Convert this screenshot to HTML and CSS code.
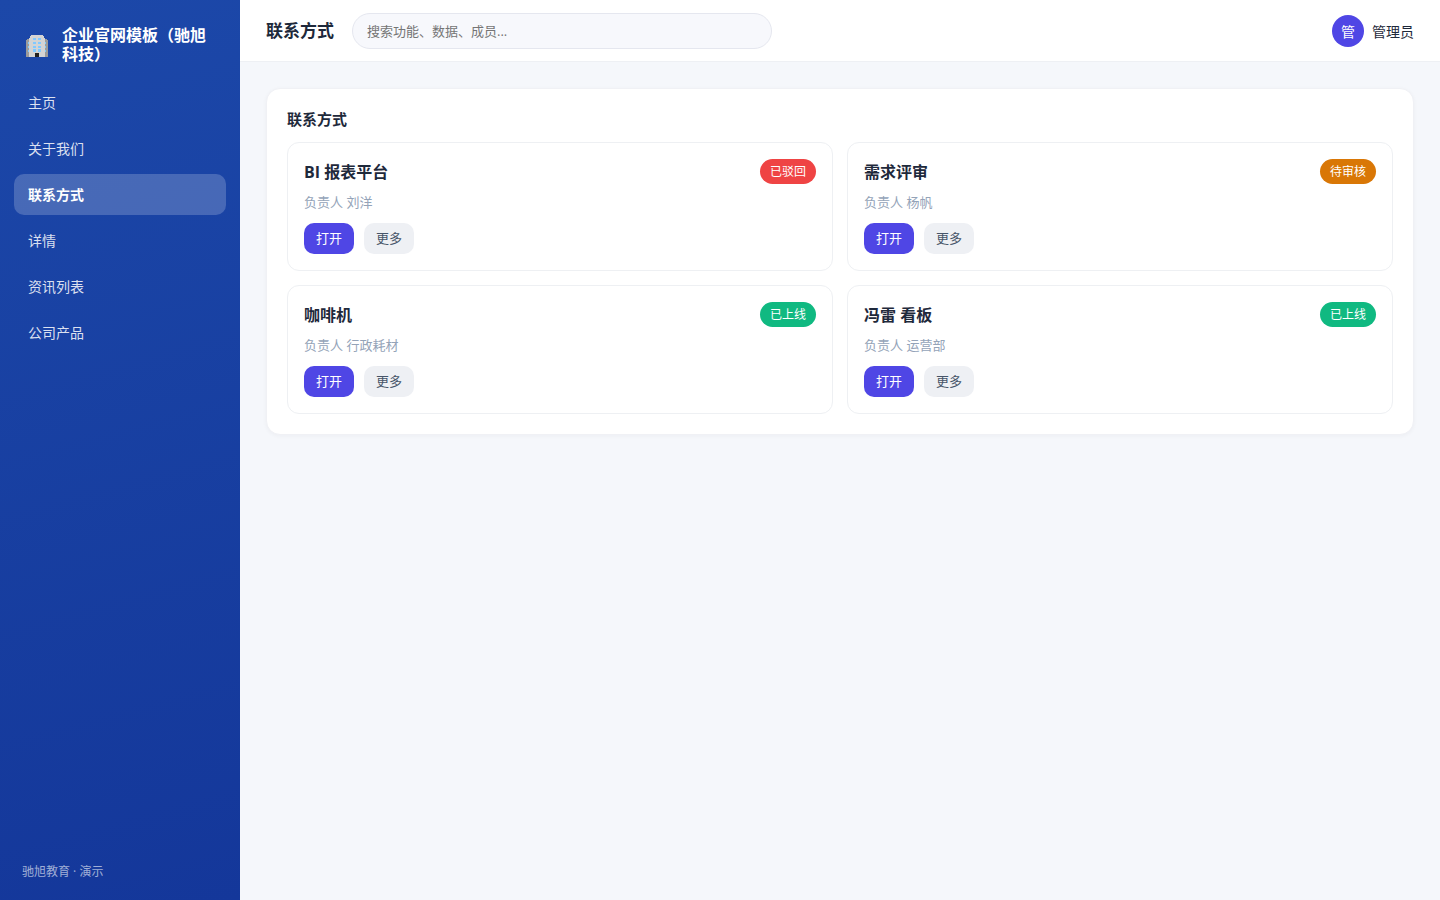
FILE: index.html
```html
<!DOCTYPE html>
<html lang="zh-CN">
<head>
<meta charset="utf-8">
<meta name="viewport" content="width=device-width, initial-scale=1">
<title>联系方式</title>
<link rel="stylesheet" href="styles.css">
</head>
<body>
<div class="app">
  <aside class="sidebar">
    <div class="brand">
      <svg class="brand-icon" viewBox="0 0 22 23" aria-hidden="true" shape-rendering="crispEdges">
        <path fill="#9b9b9b" d="M0 6h1V5h20v1h1v17H0z"/>
        <path fill="#81c9f5" d="M2 8h1v2H2zM2 12h1v2H2zM2 16h1v2H2zM19 8h1v2h-1zM19 12h1v2h-1zM19 16h1v2h-1z"/>
        <path fill="#d4d4d4" d="M3 4h1V2h1V1h12v1h1v2h1v19H3z"/>
        <path fill="#82c9ff" d="M7 4h3v2H7zM12 4h3v2h-3zM7 8h3v2H7zM12 8h3v2h-3zM7 12h3v2H7zM12 12h3v2h-3zM7 15h3v3H7zM12 15h3v3h-3z"/>
        <path fill="#212121" d="M9 19h4v4H9z"/>
      </svg>
      <span class="brand-name">企业官网模板（驰旭科技）</span>
    </div>
    <nav class="nav">
      <a class="nav-link" href="#home">主页</a>
      <a class="nav-link" href="#about">关于我们</a>
      <a class="nav-link active" href="#contact" aria-current="page">联系方式</a>
      <a class="nav-link" href="#detail">详情</a>
      <a class="nav-link" href="#news">资讯列表</a>
      <a class="nav-link" href="#products">公司产品</a>
    </nav>
    <div class="sidebar-foot">驰旭教育 · 演示</div>
  </aside>
  <div class="main">
    <header class="topbar">
      <h1 class="page-title">联系方式</h1>
      <input class="search" type="search" aria-label="搜索" placeholder="搜索功能、数据、成员...">
      <div class="user"><span class="avatar">管</span><span>管理员</span></div>
    </header>
    <main class="content">
      <section class="panel">
        <h2 class="panel-title">联系方式</h2>
        <div class="grid">
          <article class="card">
            <div class="card-head"><h3 class="card-title">BI 报表平台</h3><span class="badge red">已驳回</span></div>
            <p class="meta">负责人 刘洋</p>
            <div class="actions"><button class="btn primary" type="button">打开</button><button class="btn" type="button">更多</button></div>
          </article>
          <article class="card">
            <div class="card-head"><h3 class="card-title">需求评审</h3><span class="badge amber">待审核</span></div>
            <p class="meta">负责人 杨帆</p>
            <div class="actions"><button class="btn primary" type="button">打开</button><button class="btn" type="button">更多</button></div>
          </article>
          <article class="card">
            <div class="card-head"><h3 class="card-title">咖啡机</h3><span class="badge green">已上线</span></div>
            <p class="meta">负责人 行政耗材</p>
            <div class="actions"><button class="btn primary" type="button">打开</button><button class="btn" type="button">更多</button></div>
          </article>
          <article class="card">
            <div class="card-head"><h3 class="card-title">冯雷 看板</h3><span class="badge green">已上线</span></div>
            <p class="meta">负责人 运营部</p>
            <div class="actions"><button class="btn primary" type="button">打开</button><button class="btn" type="button">更多</button></div>
          </article>
        </div>
      </section>
    </main>
  </div>
</div>
</body>
</html>
```
FILE: styles.css
```css
* { box-sizing: border-box; }
body, h1, h2, h3, p { margin: 0; }
body {
  font-family: "Open Sans", "Noto Sans CJK SC", sans-serif;
  font-size: 14px;
  color: #1e293b;
  background: #f5f7fb;
}
button, input { font-family: inherit; }

.app { display: flex; min-height: 100vh; }

.sidebar {
  width: 240px;
  flex: none;
  display: flex;
  flex-direction: column;
  padding: 26px 14px 19px;
  background: linear-gradient(165deg, #1c48a9, #14379a);
  color: #fff;
}
.brand { display: flex; align-items: center; gap: 14px; padding: 0 8px 18px 12px; }
.brand-icon { width: 22px; height: 23px; flex: none; }
.brand-name { font-size: 16px; font-weight: 700; line-height: 19px; }
.nav { display: flex; flex-direction: column; gap: 5px; }
.nav-link {
  padding: 10px 14px;
  border-radius: 10px;
  line-height: 21px;
  color: rgba(255, 255, 255, 0.85);
  text-decoration: none;
}
.nav-link.active { background: rgba(255, 255, 255, 0.2); color: #fff; font-weight: 700; }
.sidebar-foot {
  margin-top: auto;
  padding: 0 8px;
  font-size: 12px;
  line-height: 18px;
  color: rgba(255, 255, 255, 0.6);
}

.main { flex: 1; min-width: 0; }
.topbar {
  display: flex;
  align-items: center;
  gap: 18px;
  padding: 13px 26px 12px;
  background: #fff;
  border-bottom: 1px solid #eef0f4;
}
.page-title { font-size: 17px; line-height: 24px; white-space: nowrap; }
.search {
  flex: 0 1 420px;
  min-width: 0;
  height: 36px;
  padding: 0 14px;
  border: 1px solid #e5e7ef;
  border-radius: 18px;
  background: #f7f8fc;
  font-size: 13px;
  appearance: none;
}
.search::placeholder { color: #757575; }
.user { display: flex; align-items: center; gap: 8px; margin-left: auto; white-space: nowrap; }
.avatar {
  display: grid;
  place-items: center;
  width: 32px;
  height: 32px;
  border-radius: 50%;
  background: #4f46e5;
  color: #fff;
}

.content { padding: 26px; }
.panel {
  padding: 20px;
  border: 1px solid #f0f1f5;
  border-radius: 14px;
  background: #fff;
  box-shadow: 0 1px 4px rgba(15, 23, 42, 0.04);
}
.panel-title { margin-bottom: 13px; font-size: 15px; line-height: 20px; }
.grid { display: grid; grid-template-columns: repeat(2, minmax(0, 1fr)); gap: 14px; }
.card { padding: 16px; border: 1px solid #eef0f3; border-radius: 12px; }
.card-head { display: flex; align-items: center; justify-content: space-between; gap: 10px; }
.card-title { font-size: 16px; line-height: 24px; }
.badge {
  padding: 3px 10px;
  border-radius: 13px;
  font-size: 12px;
  line-height: 19px;
  color: #fff;
  white-space: nowrap;
}
.red { background: #ef4444; }
.amber { background: #d97706; }
.green { background: #10b981; }
.meta { margin: 8px 0 10px; font-size: 13px; line-height: 21px; color: #94a3b8; }
.actions { display: flex; gap: 10px; }
.btn {
  padding: 5px 12px;
  border: 0;
  border-radius: 10px;
  background: #eef0f4;
  color: #475569;
  font-size: 13px;
  line-height: 21px;
  cursor: pointer;
}
.btn.primary { background: #4f46e5; color: #fff; }
```
